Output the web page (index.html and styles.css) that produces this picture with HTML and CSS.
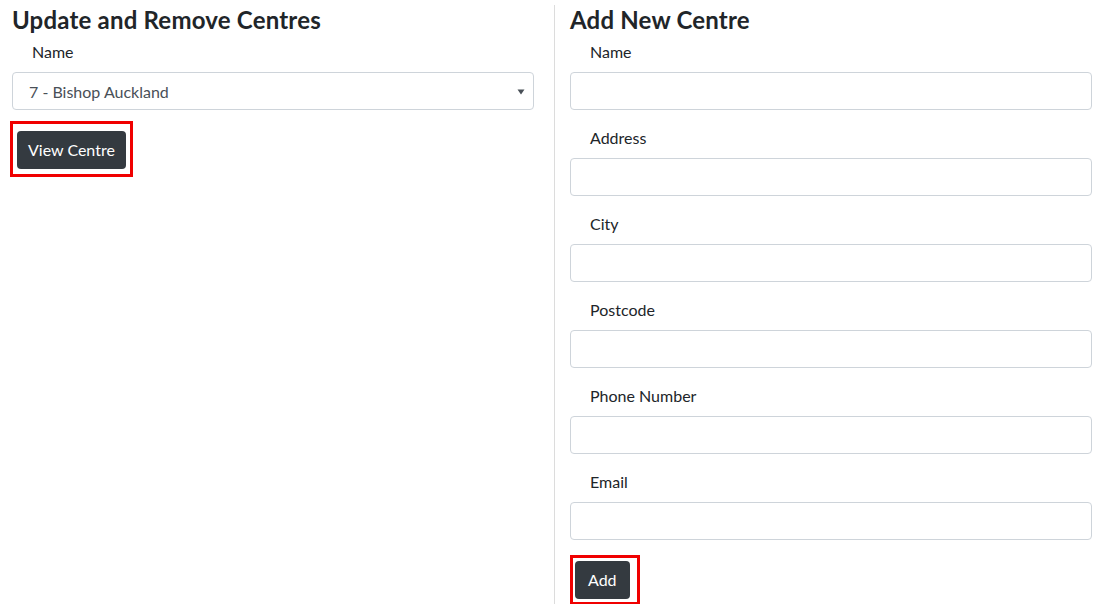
FILE: index.html
```html
<!DOCTYPE html>
<html>
<head>
<meta charset="utf-8">
<link rel="stylesheet" href="styles.css">
</head>
<body>
<div class="page">
  <section class="col col-left">
    <h4 class="title">Update and Remove Centres</h4>
    <div class="field">
      <label class="label">Name</label>
      <div class="select">
        <span class="select-text">7 - Bishop Auckland</span>
        <svg class="caret" width="8" height="6" viewBox="0 0 8 6"><path d="M0.5 0.5 H7.5 L4 5.5 Z" fill="#495057"/></svg>
      </div>
    </div>
    <div class="highlight highlight-view">
      <button class="btn">View Centre</button>
    </div>
  </section>
  <section class="col col-right">
    <h4 class="title">Add New Centre</h4>
    <div class="field"><label class="label">Name</label><div class="input"></div></div>
    <div class="field"><label class="label">Address</label><div class="input"></div></div>
    <div class="field"><label class="label">City</label><div class="input"></div></div>
    <div class="field"><label class="label">Postcode</label><div class="input"></div></div>
    <div class="field"><label class="label">Phone Number</label><div class="input"></div></div>
    <div class="field"><label class="label">Email</label><div class="input"></div></div>
    <div class="highlight highlight-add">
      <button class="btn">Add</button>
    </div>
  </section>
</div>
</body>
</html>
```
FILE: styles.css
```css
* { box-sizing: border-box; }
html, body { margin: 0; padding: 0; background: #fff; }
body {
  font-family: "Lato", "Liberation Sans", sans-serif;
  font-size: 16px;
  line-height: 24px;
  color: #212529;
}
.page {
  display: grid;
  grid-template-columns: 554px 554px;
  padding-top: 5px;
  height: 604px;
}
.col-left { padding: 0 20px 0 12px; }
.col-right {
  border-left: 1px solid #dcdcdc;
  padding: 0 16px 0 15px;
}
.title {
  margin: 0 0 6px;
  font-size: 24px;
  line-height: 29px;
  font-weight: 700;
  letter-spacing: 0.2px;
  color: #212529;
}
.field { margin-bottom: 16px; }
.label {
  display: block;
  padding-left: 20px;
  margin-bottom: 8px;
  height: 24px;
}
.input, .select {
  height: 38px;
  border: 1px solid #ced4da;
  border-radius: 4px;
  background: #fff;
}
.select {
  display: flex;
  align-items: center;
  justify-content: space-between;
  padding: 1px 8px 0 16px;
  color: #495057;
}
.highlight {
  display: inline-block;
  border: 3px solid #f00000;
  line-height: 0;
}
.highlight-view {
  margin: -5px 0 0 -2px;
  padding: 7px 4px 5px 4px;
}
.highlight-add {
  margin-top: -1px;
  padding: 3px 7px 3px 2px;
}
.btn {
  display: inline-block;
  height: 38px;
  padding: 0 13px;
  border: 0;
  border-radius: 4px;
  background: #343a40;
  color: #fff;
  font-family: inherit;
  font-size: 16px;
  line-height: 38px;
}
.highlight-view .btn { padding: 0 11px; }
```
